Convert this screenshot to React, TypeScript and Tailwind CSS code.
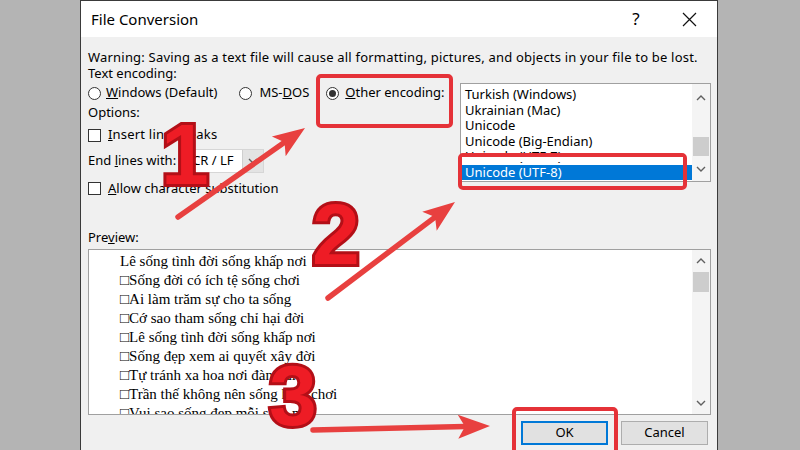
import React from 'react';

const uiFont = "font-['Noto_Sans','DejaVu_Sans',sans-serif]";

const encodings = [
  'Turkish (Windows)',
  'Ukrainian (Mac)',
  'Unicode',
  'Unicode (Big-Endian)',
  'Unicode (UTF-7)',
  'Unicode (UTF-8)',
];

const preview = [
  'Lê sống tình đời sống khấp nơi',
  '□Sống đời có ích tệ sống chơi',
  '□Ai làm trăm sự cho ta sống',
  '□Cớ sao tham sống chỉ hại đời',
  '□Lê sống tình đời sống khấp nơi',
  '□Sống đẹp xem ai quyết xây đời',
  '□Tự tránh xa hoa nơi đàng điếm',
  '□Trần thế không nên sống ham chơi',
  '□Vui sao sống đẹp mỗi sớm mai',
];

const Chevron: React.FC<{ up?: boolean }> = ({ up }) => (
  <svg width="10" height="6" viewBox="0 0 10 6">
    <polyline
      points={up ? '1,5 5,1 9,5' : '1,1 5,5 9,1'}
      fill="none"
      stroke="#606060"
      strokeWidth="1.4"
    />
  </svg>
);

const Radio: React.FC<{ checked?: boolean }> = ({ checked }) => (
  <span className="w-[13px] h-[13px] rounded-full border border-[#333] bg-white flex items-center justify-center shrink-0">
    {checked && <span className="w-[7px] h-[7px] rounded-full bg-[#333]" />}
  </span>
);

const Checkbox = () => <span className="w-[13px] h-[13px] border border-[#333] bg-white shrink-0" />;

// red annotation arrow, head drawn from the direction of the shaft
const Arrow: React.FC<{ x1: number; y1: number; x2: number; y2: number }> = ({ x1, y1, x2, y2 }) => {
  const len = Math.hypot(x2 - x1, y2 - y1);
  const ux = (x2 - x1) / len;
  const uy = (y2 - y1) / len;
  const hl = 32;
  const hw = 12;
  const bx = x2 - ux * hl;
  const by = y2 - uy * hl;
  const nx = x2 - ux * (hl - 7);
  const ny = y2 - uy * (hl - 7);
  const pts = `${x2},${y2} ${bx - uy * hw},${by + ux * hw} ${nx},${ny} ${bx + uy * hw},${by - ux * hw}`;
  return (
    <g>
      <line x1={x1} y1={y1} x2={nx} y2={ny} stroke="#e8403f" strokeWidth="5.5" strokeLinecap="round" />
      <polygon points={pts} fill="#e8403f" />
    </g>
  );
};

const Step: React.FC<{ n: string; className: string }> = ({ n, className }) => (
  <div
    className={`absolute leading-none font-['Liberation_Sans',sans-serif] font-bold text-[86px] text-[#ee1c25] [-webkit-text-stroke:6px_#b30f17] [paint-order:stroke_fill] ${className}`}
  >
    {n}
  </div>
);

export default function App() {
  return (
    <div className={`relative w-[800px] h-[450px] overflow-hidden bg-[#b4b4b4] flex ${uiFont} text-[13px] text-black`}>
      <div className="ml-[80px] w-[638px] h-[470px] border border-b-0 border-[#3a3a3a] bg-[#f0f0f0] flex flex-col">
        {/* Title bar */}
        <div className="h-[36px] bg-white flex items-center pl-[10px]">
          <span className="text-[15px]">File Conversion</span>
          <span className="ml-auto text-[17px] w-[20px] text-center">?</span>
          <span className="ml-[33px] mr-[18px] w-[20px] flex justify-center">
            <svg width="15" height="15" viewBox="0 0 15 15">
              <path d="M1 1 L14 14 M14 1 L1 14" stroke="#111" strokeWidth="1.2" />
            </svg>
          </span>
        </div>

        {/* Body */}
        <div className="pt-[12px] pl-[7px] pr-[6px] flex flex-col">
          <div className="h-[16px] leading-[16px] tracking-[0.2px] whitespace-nowrap">
            Warning: Saving as a text file will cause all formatting, pictures, and objects in your file to be lost.
          </div>
          <div className="h-[16px] leading-[16px]">Text encoding:</div>

          <div className="mt-[2px] flex">
            <div className="w-[372px] flex flex-col">
              <div className="h-[20px] flex items-center">
                <Radio />
                <span className="ml-[5px]">
                  <u>W</u>indows (Default)
                </span>
                <span className="ml-[22px]">
                  <Radio />
                </span>
                <span className="ml-[7px]">
                  MS-<u>D</u>OS
                </span>
                <span className="ml-[17px]">
                  <Radio checked />
                </span>
                <span className="ml-[6px]">
                  <u>O</u>ther encoding:
                </span>
              </div>
              <div className="h-[18px] mt-[1px] flex items-center">Options:</div>
              <div className="h-[18px] mt-[4px] flex items-center">
                <Checkbox />
                <span className="ml-[7px] tracking-[0.2px]">
                  <u>I</u>nsert line breaks
                </span>
              </div>
              <div className="h-[24px] mt-[5px] flex items-center">
                <span>
                  End <u>l</u>ines with:
                </span>
                <div className="ml-[11px] w-[77px] h-[24px] flex bg-white border border-[#d6d6d6]">
                  <span className="flex-1 pl-[4px] flex items-center">CR / LF</span>
                  <span className="w-[21px] bg-[#e3e3e3] border-l border-[#cfcfcf] flex items-center justify-center">
                    <Chevron />
                  </span>
                </div>
              </div>
              <div className="h-[17px] mt-[7px] flex items-center">
                <Checkbox />
                <span className="ml-[7px]">
                  <u>A</u>llow character substitution
                </span>
              </div>
            </div>

            {/* Encoding list */}
            <div className="w-[251px] h-[99px] bg-white border border-[#a0a0a0] flex">
              <div className="flex-1 pt-[3px] pl-[1px] flex flex-col">
                {encodings.map((e, i) => (
                  <div
                    key={e}
                    className={`h-[15.5px] leading-[15.5px] pl-[3px] ${
                      i === encodings.length - 1 ? 'bg-[#0078d7] text-white' : ''
                    }`}
                  >
                    {e}
                  </div>
                ))}
              </div>
              <div className="w-[18px] bg-[#f4f4f4] flex flex-col">
                <div className="h-[28px] flex items-center justify-center">
                  <Chevron up />
                </div>
                <div className="mt-[25px] mx-[1px] h-[19px] bg-[#cdcdcd]" />
                <div className="mt-auto h-[24px] flex items-center justify-center">
                  <Chevron />
                </div>
              </div>
            </div>
          </div>

          <div className="mt-[32px] h-[16px] leading-[16px]">
            Pre<u>v</u>iew:
          </div>

          {/* Preview box */}
          <div className="mt-[4px] h-[166px] bg-white border border-[#a0a0a0] flex overflow-hidden">
            <div className="flex-1 pl-[31px] pt-[2px] font-['Liberation_Serif',serif] text-[15px] leading-[19px] whitespace-nowrap">
              {preview.map((l) => (
                <div key={l}>{l}</div>
              ))}
            </div>
            <div className="w-[18px] bg-[#f4f4f4] flex flex-col">
              <div className="h-[22px] flex items-center justify-center">
                <Chevron up />
              </div>
              <div className="mx-[1px] h-[20px] bg-[#cdcdcd]" />
              <div className="mt-auto h-[22px] flex items-center justify-center">
                <Chevron />
              </div>
            </div>
          </div>

          {/* Buttons */}
          <div className="mt-[6px] pr-[3px] flex justify-end gap-[13px]">
            <button className="w-[87px] h-[24px] bg-[#e1e1e1] border-2 border-[#0078d7]">OK</button>
            <button className="w-[87px] h-[24px] bg-[#e1e1e1] border border-[#adadad]">Cancel</button>
          </div>
        </div>
      </div>

      {/* Annotations */}
      <div className="absolute left-[316px] top-[74px] w-[137px] h-[54px] border-4 border-[#e53238] rounded-[5px]" />
      <div className="absolute left-[458px] top-[153px] w-[229px] h-[37px] border-4 border-[#e53238] rounded-[5px]">
        <div className="h-[5px] bg-white" />
      </div>
      <div className="absolute left-[512px] top-[407px] w-[106px] h-[54px] border-4 border-[#e53238] rounded-[5px]" />

      <svg className="absolute left-0 top-0 pointer-events-none" width="800" height="450" viewBox="0 0 800 450">
        <Arrow x1={178} y1={217} x2={305} y2={128} />
        <Arrow x1={328} y1={298} x2={455} y2={202} />
        <Arrow x1={313} y1={430} x2={490} y2={426} />
      </svg>

      <Step n="1" className="left-[161px] top-[111px]" />
      <Step n="2" className="left-[312px] top-[191px]" />
      <Step n="3" className="left-[269px] top-[352px]" />
    </div>
  );
}
